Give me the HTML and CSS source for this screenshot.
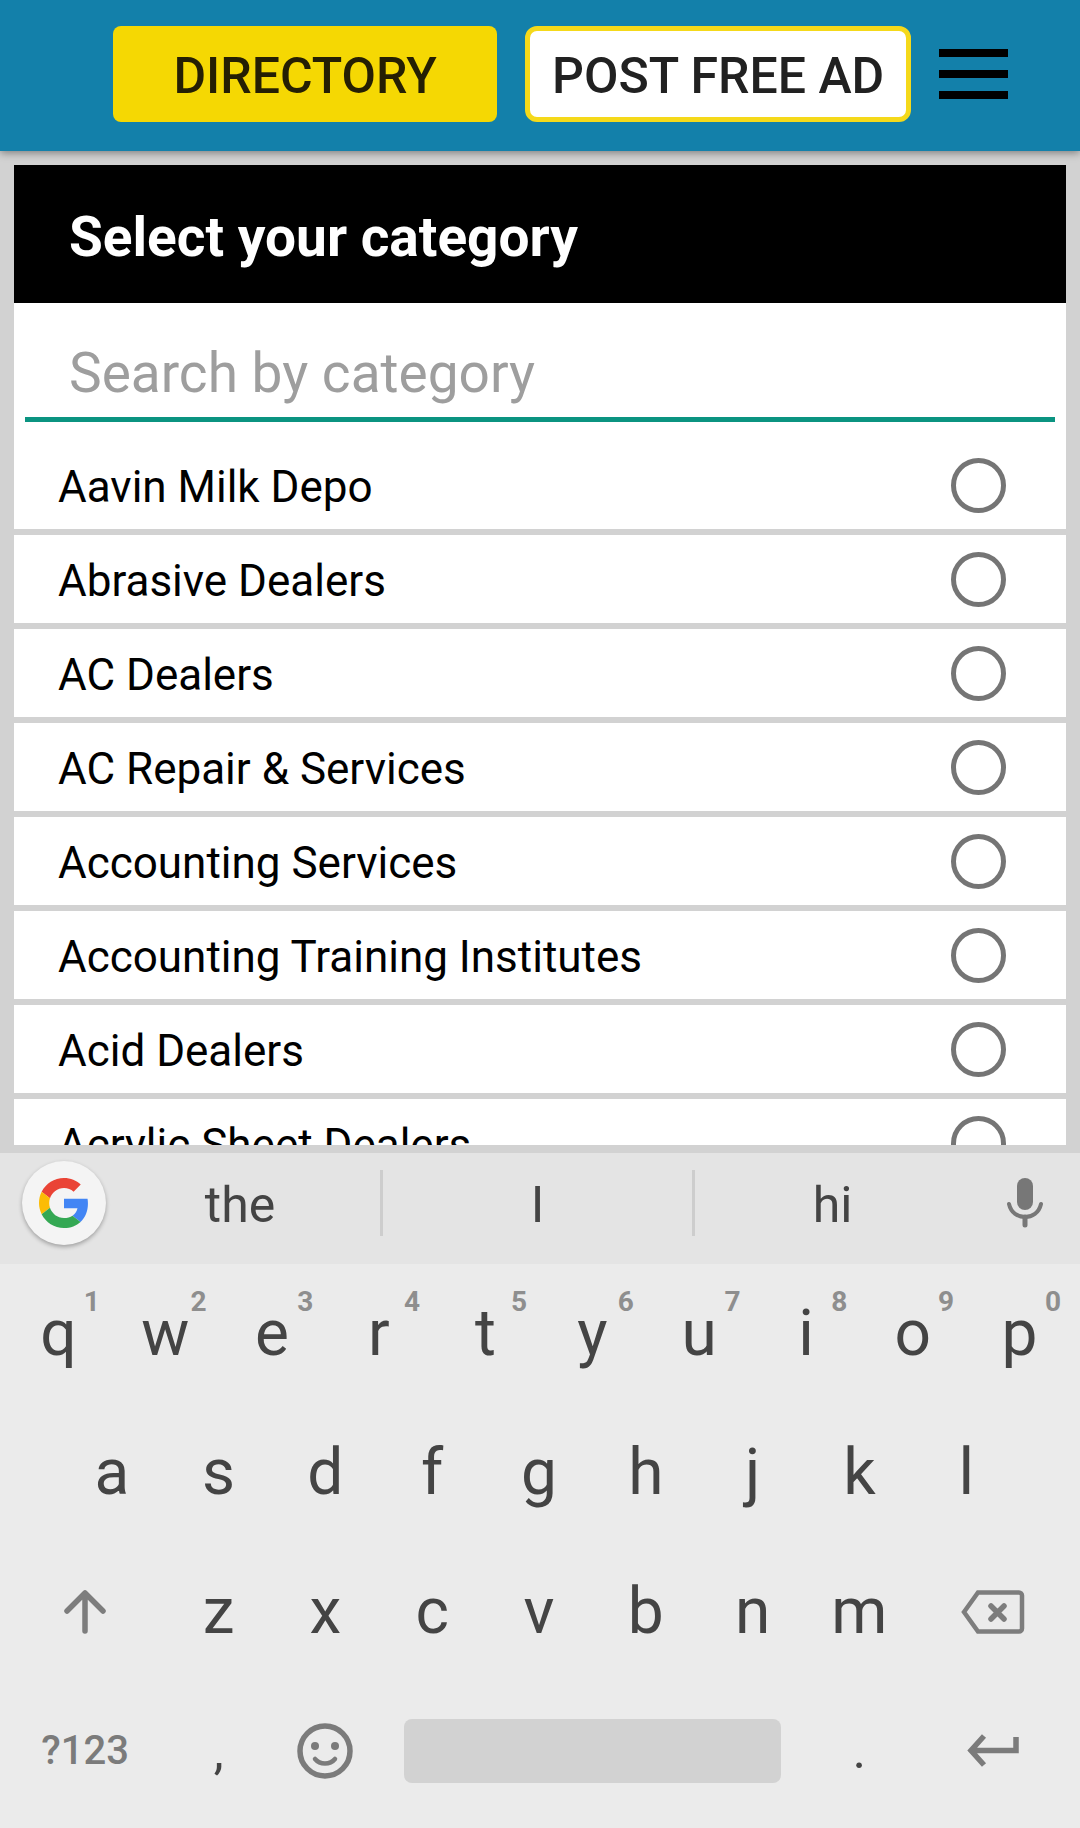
FILE: index.html
```html
<!DOCTYPE html>
<html lang="en">

<head>
  <meta charset="UTF-8">
  <meta name="viewport" content="width=device-width, initial-scale=1">
  <title>Select your category</title>
  <link rel="stylesheet" href="styles.css">
</head>

<body>
  <header class="topbar">
    <button class="btn btn-directory">DIRECTORY</button>
    <button class="btn btn-post">POST FREE AD</button>
    <button class="menu" aria-label="Menu">
      <span></span>
      <span></span>
      <span></span>
    </button>
  </header>

  <main class="content">
    <div class="panel">
      <h1 class="panel-title">Select your category</h1>
      <input class="search" type="text" placeholder="Search by category" aria-label="Search by category">
      <div class="category-list">
        <label class="category"><span>Aavin Milk Depo</span><input type="radio" name="category"></label>
        <label class="category"><span>Abrasive Dealers</span><input type="radio" name="category"></label>
        <label class="category"><span>AC Dealers</span><input type="radio" name="category"></label>
        <label class="category"><span>AC Repair &amp; Services</span><input type="radio" name="category"></label>
        <label class="category"><span>Accounting Services</span><input type="radio" name="category"></label>
        <label class="category"><span>Accounting Training Institutes</span><input type="radio" name="category"></label>
        <label class="category"><span>Acid Dealers</span><input type="radio" name="category"></label>
        <label class="category"><span>Acrylic Sheet Dealers</span><input type="radio" name="category"></label>
      </div>
    </div>
  </main>

  <section class="keyboard">
    <div class="suggestions">
      <button class="google" aria-label="Google">
        <svg width="50" height="50" viewBox="0 0 48 48">
          <path fill="#ea4335" d="M24 9.5c3.54 0 6.71 1.22 9.21 3.6l6.85-6.85C35.9 2.38 30.47 0 24 0 14.62 0 6.51 5.38 2.56 13.22l7.98 6.19C12.43 13.72 17.74 9.5 24 9.5z"/>
          <path fill="#4285f4" d="M46.98 24.55c0-1.57-.15-3.09-.38-4.55H24v9.02h12.94c-.58 2.96-2.26 5.48-4.78 7.18l7.73 6c4.51-4.18 7.09-10.36 7.09-17.65z"/>
          <path fill="#fbbc05" d="M10.53 28.59c-.48-1.45-.76-2.99-.76-4.59s.27-3.14.76-4.59l-7.98-6.19C.92 16.46 0 20.12 0 24c0 3.88.92 7.54 2.56 10.78l7.97-6.19z"/>
          <path fill="#34a853" d="M24 48c6.48 0 11.93-2.13 15.89-5.81l-7.73-6c-2.15 1.45-4.92 2.3-8.16 2.3-6.26 0-11.57-4.22-13.47-9.91l-7.98 6.19C6.51 42.62 14.62 48 24 48z"/>
        </svg>
      </button>
      <button class="suggestion">the</button>
      <button class="suggestion">I</button>
      <button class="suggestion">hi</button>
      <button class="mic" aria-label="Voice input">
        <svg width="36" height="50" viewBox="0 0 36 50">
          <rect x="10" y="0" width="16" height="32" rx="8" fill="#777"/>
          <path d="M2 26C4 35 11 39 18 39S32 35 34 26" fill="none" stroke="#777" stroke-width="4" stroke-linecap="round"/>
          <path d="M18 39V47" stroke="#777" stroke-width="5" stroke-linecap="round"/>
        </svg>
      </button>
    </div>

    <div class="keys">
      <div class="key-row">
        <button class="key">q<sup>1</sup></button>
        <button class="key">w<sup>2</sup></button>
        <button class="key">e<sup>3</sup></button>
        <button class="key">r<sup>4</sup></button>
        <button class="key">t<sup>5</sup></button>
        <button class="key">y<sup>6</sup></button>
        <button class="key">u<sup>7</sup></button>
        <button class="key">i<sup>8</sup></button>
        <button class="key">o<sup>9</sup></button>
        <button class="key">p<sup>0</sup></button>
      </div>
      <div class="key-row key-row-middle">
        <button class="key">a</button>
        <button class="key">s</button>
        <button class="key">d</button>
        <button class="key">f</button>
        <button class="key">g</button>
        <button class="key">h</button>
        <button class="key">j</button>
        <button class="key">k</button>
        <button class="key">l</button>
      </div>
      <div class="key-row">
        <button class="key key-wide" aria-label="Shift">
          <svg width="42" height="44" viewBox="0 0 42 44" fill="none" stroke="#7d7d7d" stroke-width="5.5" stroke-linecap="round" stroke-linejoin="round">
            <path d="M3 21L21 3L39 21M21 4V41"/>
          </svg>
        </button>
        <button class="key">z</button>
        <button class="key">x</button>
        <button class="key">c</button>
        <button class="key">v</button>
        <button class="key">b</button>
        <button class="key">n</button>
        <button class="key">m</button>
        <button class="key key-wide" aria-label="Delete">
          <svg width="64" height="44" viewBox="0 0 64 44" fill="none" stroke="#7d7d7d">
            <path d="M3 22L17 2.5H58a3 3 0 0 1 3 3V38.5a3 3 0 0 1-3 3H17Z" stroke-width="4.5"/>
            <path d="M30 16L43 29M43 16L30 29" stroke-width="5.5" stroke-linecap="round"/>
          </svg>
        </button>
      </div>
      <div class="key-row">
        <button class="key key-wide key-symbols">?123</button>
        <button class="key key-dot">,</button>
        <button class="key" aria-label="Emoji">
          <svg width="56" height="56" viewBox="0 0 56 56">
            <circle cx="28" cy="28" r="25" fill="none" stroke="#7b7b7b" stroke-width="5.5"/>
            <circle cx="18" cy="23" r="4" fill="#7b7b7b"/>
            <circle cx="38" cy="23" r="4" fill="#7b7b7b"/>
            <path d="M18 36C23 42 33 42 38 36" fill="none" stroke="#7b7b7b" stroke-width="4.5" stroke-linecap="round"/>
          </svg>
        </button>
        <button class="key key-space" aria-label="Space"><span class="space"></span></button>
        <button class="key key-dot">.</button>
        <button class="key key-wide" aria-label="Enter">
          <svg width="52" height="33" viewBox="0 0 52 33" fill="none" stroke="#7b7b7b" stroke-width="5.5">
            <path d="M17 2L4 16.5L17 31M4 16.5H49V3"/>
          </svg>
        </button>
      </div>
    </div>
  </section>
</body>

</html>
```
FILE: styles.css
```css
* {
  box-sizing: border-box;
}

body {
  margin: 0;
  height: 100vh;
  display: flex;
  flex-direction: column;
  overflow: hidden;
  background-color: #d2d2d2;
  font-family: Roboto, sans-serif;
}

button {
  padding: 0;
  border: none;
  background: none;
  font-family: inherit;
  color: inherit;
  cursor: pointer;
}

/* top bar */
.topbar {
  display: flex;
  gap: 28px;
  padding: 26px 72px 29px 113px;
  background-color: #1380aa;
  box-shadow: 0 2px 8px rgba(0, 0, 0, 0.4);
}

.btn {
  flex: 1 1 50%;
  height: 96px;
  padding-top: 4px;
  border-radius: 8px;
  font-size: 50px;
  font-weight: 500;
  white-space: nowrap;
}

.btn-directory {
  background-color: #f5d803;
  color: #251f03;
}

.btn-post {
  border: 5px solid #f5d91a;
  border-radius: 12px;
  background-color: white;
  color: #212121;
}

.menu {
  display: flex;
  flex: none;
  flex-direction: column;
  justify-content: center;
  gap: 13px;
  width: 69px;
}

.menu span {
  height: 8px;
  background-color: black;
}

/* category panel */
.content {
  flex: 1;
  min-height: 0;
  padding: 14px 14px 8px;
}

.panel {
  height: 100%;
  overflow: hidden;
  background-color: white;
}

.panel-title {
  margin: 0;
  padding: 40px 55px 34px;
  background-color: black;
  color: white;
  font-size: 55px;
  line-height: 64px;
  font-weight: 700;
}

.search {
  display: block;
  width: calc(100% - 22px);
  height: 119px;
  margin: 0 11px 19px;
  padding: 25px 44px 0;
  border: none;
  border-bottom: 5px solid #0b9481;
  border-radius: 0;
  outline: none;
  font-family: inherit;
  font-size: 55px;
}

.search::placeholder {
  color: #9e9e9e;
}

.category {
  display: flex;
  align-items: center;
  justify-content: space-between;
  height: 94px;
  padding: 0 60px 0 44px;
  border-bottom: 6px solid #d2d2d2;
  font-size: 44px;
}

.category span {
  padding-top: 4px;
}

.category input {
  appearance: none;
  width: 55px;
  height: 55px;
  margin: 0;
  border: 5px solid #757575;
  border-radius: 50%;
}

.category input:checked {
  background-color: #0b9481;
}

/* keyboard */
.keyboard {
  background-color: #ebebeb;
  color: #444;
}

.suggestions {
  display: grid;
  grid-template-columns: 100px 280fr 312fr 278fr 110px;
  align-items: center;
  height: 111px;
  padding-bottom: 12px;
  background-color: #e4e4e4;
}

.suggestion {
  height: 66px;
  padding-top: 5px;
  font-size: 50px;
}

.suggestion + .suggestion {
  border-left: 3px solid #cdcdcd;
}

.google {
  display: flex;
  align-items: center;
  justify-content: center;
  width: 84px;
  height: 84px;
  margin-left: 22px;
  border-radius: 50%;
  background-color: #f4f4f4;
  box-shadow: 0 2px 4px rgba(0, 0, 0, 0.3);
}

.mic {
  display: flex;
  justify-content: center;
}

.keys {
  padding: 0 7px 8px 5px;
}

.key-row {
  display: flex;
  height: 139px;
}

.key-row-middle {
  padding: 0 5%;
}

.key {
  flex: 2 0 0;
  position: relative;
  display: flex;
  align-items: center;
  justify-content: center;
  font-size: 64px;
}

.key sup {
  position: absolute;
  top: 21px;
  right: 12px;
  font-size: 28px;
  line-height: 33px;
  font-weight: 700;
  color: #8e8e8e;
}

.key-wide {
  flex-grow: 3;
}

.key-symbols {
  font-size: 40px;
  font-weight: 500;
  color: #7b7b7b;
}

.key-dot {
  font-size: 50px;
}

.key-space {
  flex-grow: 8;
}

.space {
  flex: 1;
  height: 64px;
  margin: 0 25px;
  border-radius: 8px;
  background-color: #d2d2d2;
}
```
